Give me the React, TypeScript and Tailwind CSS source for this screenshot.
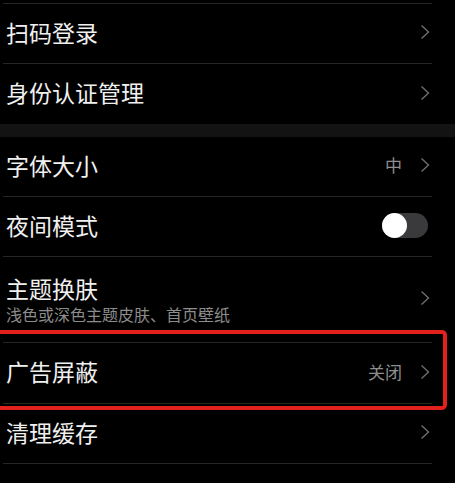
const Chevron = () => (
  <svg width="10" height="16" viewBox="0 0 10 16" className="shrink-0">
    <polyline points="1.5,1.5 8.5,8 1.5,14.5" fill="none" stroke="#6e6e6e" strokeWidth="1.4" />
  </svg>
);

type RowProps = {
  title: string;
  sub?: string;
  value?: string;
  toggle?: boolean;
  h: string;
};

const Row = ({ title, sub, value, toggle, h }: RowProps) => (
  <div className={`flex items-center justify-between border-b border-[#262626] pl-[3px] pr-[2px] ${h}`}>
    <div className="flex flex-col pb-[4px]">
      <span className="text-[23px] leading-[32px] text-[#f0f0f0]">{title}</span>
      {sub && <span className="text-[16px] leading-[20px] text-[#8c8c8c]">{sub}</span>}
    </div>
    {toggle ? (
      <div className="flex w-[46px] h-[25px] rounded-full bg-[#3a3a3c] items-center mr-[2px] mb-[2px]">
        <div className="w-[25px] h-[25px] rounded-full bg-white"></div>
      </div>
    ) : (
      <div className="flex items-center gap-[18px] pb-[3px]">
        {value && <span className="text-[17px] text-[#8e8e8e]">{value}</span>}
        <Chevron />
      </div>
    )}
  </div>
);

export default function App() {
  return (
    <div
      className="relative w-[455px] h-[483px] overflow-hidden bg-black"
      style={{ fontFamily: '"Noto Sans CJK SC", "Noto Sans", sans-serif' }}
    >
      <div className="ml-[3px] w-[429px] pt-[3px]">
        <div className="border-b border-[#262626]"></div>
        <Row title="扫码登录" h="h-[60px]" />
        <Row title="身份认证管理" h="h-[60px] border-b-0" />
      </div>
      <div className="h-[13px] bg-[#131313]"></div>
      <div className="ml-[3px] w-[429px]">
        <Row title="字体大小" value="中" h="h-[60px]" />
        <Row title="夜间模式" toggle h="h-[60px]" />
        <Row title="主题换肤" sub="浅色或深色主题皮肤、首页壁纸" h="h-[86px]" />
        <Row title="广告屏蔽" value="关闭" h="h-[61px]" />
        <Row title="清理缓存" h="h-[60px]" />
      </div>
      <div className="absolute left-[-8px] top-[330px] w-[455px] h-[80px] rounded-[5px] border-[4px] border-[#e3211c]"></div>
    </div>
  );
}
